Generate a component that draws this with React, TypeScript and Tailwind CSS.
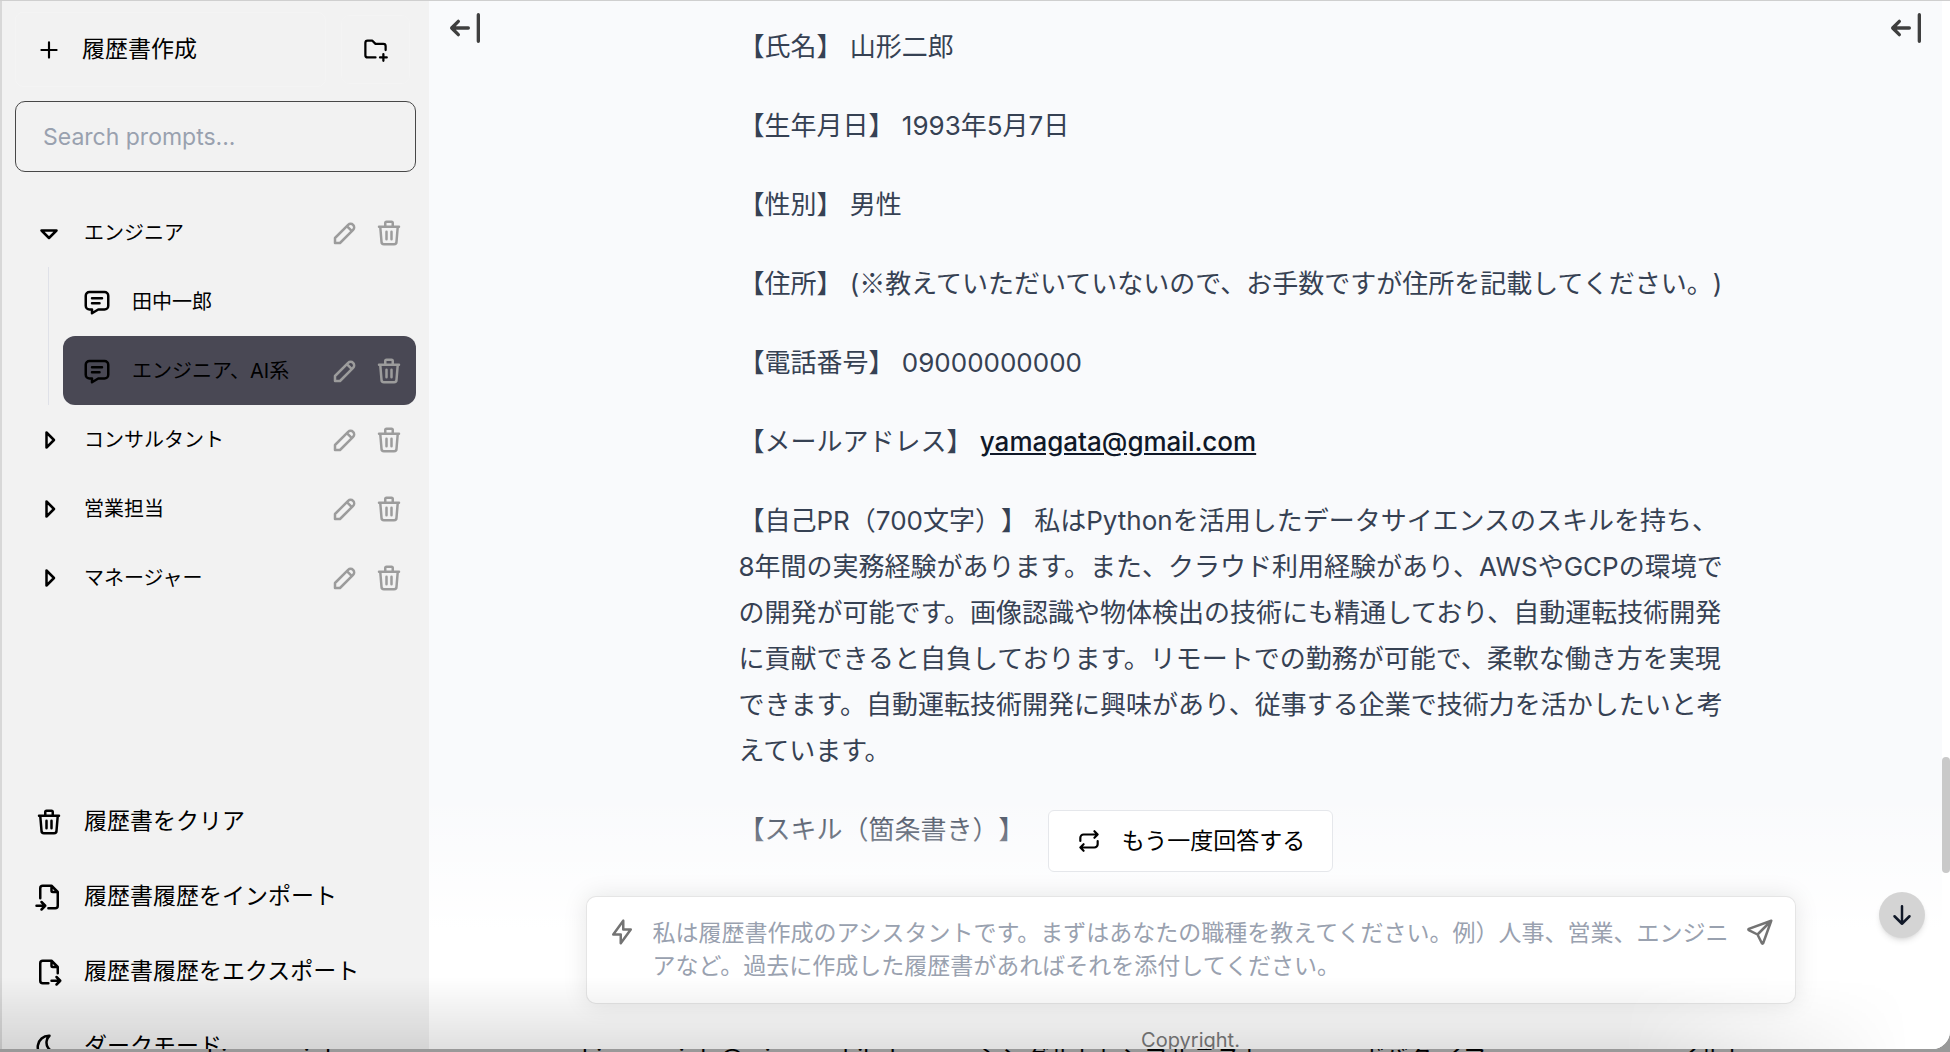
import type { ReactNode } from 'react';

const PATHS = {
  plus: 'M12 5v14M5 12h14',
  folderPlus: 'M12 19h-7a2 2 0 0 1 -2 -2v-11a2 2 0 0 1 2 -2h4l3 3h7a2 2 0 0 1 2 2v3.5M16 19h6M19 16v6',
  caretDown: 'M6 10l6 6l6 -6h-12',
  caretRight: 'M10 18l6 -6l-6 -6v12',
  message:
    'M8 9h8M8 13h6M18 4a3 3 0 0 1 3 3v8a3 3 0 0 1 -3 3h-5l-5 3v-3h-2a3 3 0 0 1 -3 -3v-8a3 3 0 0 1 3 -3h12z',
  pencil: 'M4 20h4l10.5 -10.5a1.5 1.5 0 0 0 -4 -4l-10.5 10.5v4M13.5 6.5l4 4',
  trash:
    'M4 7h16M10 11v6M14 11v6M5 7l1 12a2 2 0 0 0 2 2h8a2 2 0 0 0 2 -2l1 -12M9 7v-3a1 1 0 0 1 1 -1h4a1 1 0 0 1 1 1v3',
  fileImport:
    'M14 3v4a1 1 0 0 0 1 1h4M5 13v-8a2 2 0 0 1 2 -2h7l5 5v11a2 2 0 0 1 -2 2h-5.5m-9.5 -2h7m-3 -3l3 3l-3 3',
  fileExport:
    'M14 3v4a1 1 0 0 0 1 1h4M11.5 21h-4.5a2 2 0 0 1 -2 -2v-14a2 2 0 0 1 2 -2h7l5 5v5m-5 6h7m-3 -3l3 3l-3 3',
  moon: 'M12 3c.132 0 .263 0 .393 0a7.5 7.5 0 0 0 7.92 12.446a9 9 0 1 1 -8.313 -12.454z',
  bolt: 'M13 3v7h6l-8 11v-7h-6l8 -11',
  send: 'M10 14l11 -11M21 3l-6.5 18a.55 .55 0 0 1 -1 0l-3.5 -7l-7 -3.5a.55 .55 0 0 1 0 -1l18 -6.5',
  repeat: 'M4 12v-3a3 3 0 0 1 3 -3h13m-3 -3l3 3l-3 3M20 12v3a3 3 0 0 1 -3 3h-13m3 3l-3 -3l3 -3',
  arrowDown: 'M12 5v14M18 13l-6 6M6 13l6 6',
  arrowBarLeft: 'M4 12h10M4 12l4 4M4 12l4 -4M20 4v16',
};

type IconName = keyof typeof PATHS;

function Icon({ name, size = 30 }: { name: IconName; size?: number }) {
  return (
    <svg
      width={size}
      height={size}
      viewBox="0 0 24 24"
      fill="none"
      stroke="currentColor"
      strokeWidth={2}
      strokeLinecap="round"
      strokeLinejoin="round"
      className="shrink-0"
      aria-hidden="true"
    >
      <path d={PATHS[name]} />
    </svg>
  );
}

function RowActions() {
  return (
    <div className="flex gap-[14px] text-[#9c9c9c]">
      <button aria-label="編集">
        <Icon name="pencil" />
      </button>
      <button aria-label="削除">
        <Icon name="trash" />
      </button>
    </div>
  );
}

function FolderRow({ name, open }: { name: string; open?: boolean }) {
  return (
    <div className="flex h-[69px] items-center pl-[19px] pr-3">
      <button className="flex flex-1 items-center gap-5 text-left text-[20px]" aria-expanded={!!open}>
        <Icon name={open ? 'caretDown' : 'caretRight'} />
        {name}
      </button>
      <RowActions />
    </div>
  );
}

function ChatRow({ name, selected }: { name: string; selected?: boolean }) {
  return (
    <div className={`flex h-[69px] items-center rounded-xl pl-[19px] pr-3 ${selected ? 'bg-[#494854]' : ''}`}>
      <button className="flex flex-1 items-center gap-5 text-left text-[20px]">
        <Icon name="message" />
        {name}
      </button>
      {selected && <RowActions />}
    </div>
  );
}

const menu: { icon: IconName; label: string }[] = [
  { icon: 'trash', label: '履歴書をクリア' },
  { icon: 'fileImport', label: '履歴書履歴をインポート' },
  { icon: 'fileExport', label: '履歴書履歴をエクスポート' },
  { icon: 'moon', label: 'ダークモード' },
];

function Sidebar() {
  return (
    <aside className="flex w-[429px] shrink-0 flex-col border-l-2 border-[#d8d8d8] bg-[#f2f2f2] px-[13px] text-black">
      <div className="mt-[11px] flex items-center justify-between">
        <button className="flex h-[75px] w-[311px] items-center gap-5 rounded-lg border border-[#f4f4f4] pl-5 text-[23px]">
          <Icon name="plus" size={26} />
          履歴書作成
        </button>
        <button
          className="mr-[6px] flex h-[69px] w-[69px] items-center justify-center rounded-lg border border-[#f4f4f4]"
          aria-label="フォルダを追加"
        >
          <Icon name="folderPlus" size={27} />
        </button>
      </div>

      <input
        type="text"
        aria-label="Search prompts"
        placeholder="Search prompts..."
        className="mt-[14px] h-[71px] w-full rounded-[10px] border border-[#484848] bg-transparent px-[27px] text-[23px] placeholder:text-gray-400"
      />

      <div className="mt-[26px] min-h-0 flex-1 overflow-hidden">
        <FolderRow name="エンジニア" open />
        <div className="ml-[33px] border-l border-[#dfe1e8] pl-[14px]">
          <ChatRow name="田中一郎" />
          <ChatRow name="エンジニア、AI系" selected />
        </div>
        <FolderRow name="コンサルタント" />
        <FolderRow name="営業担当" />
        <FolderRow name="マネージャー" />
      </div>

      <div className="flex h-[265px] shrink-0 flex-col overflow-hidden">
        {menu.map((item) => (
          <button key={item.label} className="flex h-[75px] shrink-0 items-center gap-5 pl-[19px] text-[23px]">
            <Icon name={item.icon} />
            {item.label}
          </button>
        ))}
      </div>
    </aside>
  );
}

function Line({ children }: { children: ReactNode }) {
  return <p className="mb-[33px]">{children}</p>;
}

function Answer() {
  return (
    <div className="mx-auto w-full max-w-[1210px] pl-[158px] pr-[60px] pt-[23px] text-[26px] leading-[46px] text-gray-700">
      <Line>【氏名】 山形二郎</Line>
      <Line>【生年月日】 1993年5月7日</Line>
      <Line>【性別】 男性</Line>
      <Line>
        【住所】 (<span className="font-['Noto_Sans_CJK_JP',sans-serif] leading-none">※</span>
        教えていただいていないので、お手数ですが住所を記載してください。)
      </Line>
      <Line>【電話番号】 09000000000</Line>
      <Line>
        【メールアドレス】{' '}
        <a href="mailto:yamagata@gmail.com" className="font-medium text-gray-900 underline">
          yamagata@gmail.com
        </a>
      </Line>
      <Line>
        【自己PR（700文字）】 私はPythonを活用したデータサイエンスのスキルを持ち、8年間の実務経験があります。また、クラウド利用経験があり、AWSやGCPの環境での開発が可能です。画像認識や物体検出の技術にも精通しており、自動運転技術開発に貢献できると自負しております。リモートでの勤務が可能で、柔軟な働き方を実現できます。自動運転技術開発に興味があり、従事する企業で技術力を活かしたいと考えています。
      </Line>
      <Line>【スキル（箇条書き）】</Line>
    </div>
  );
}

function Composer() {
  return (
    <div className="absolute inset-x-0 bottom-0 flex h-[299px] flex-col items-center bg-linear-to-b from-transparent from-15% via-white via-60% to-white pl-[2px] pt-[60px]">
      <button className="flex h-[62px] shrink-0 items-center gap-5 rounded-md border border-gray-200 bg-white px-[27px] text-[23px] text-black">
        <Icon name="repeat" size={26} />
        もう一度回答する
      </button>
      <div className="mt-6 flex h-[108px] w-full max-w-[1210px] shrink-0 items-start rounded-[10px] border border-black/10 bg-white px-5 pt-5 text-[#737373] shadow-[0_0_24px_rgba(0,0,0,0.10)]">
        <button aria-label="モデル">
          <Icon name="bolt" />
        </button>
        <textarea
          aria-label="メッセージ"
          rows={2}
          placeholder="私は履歴書作成のアシスタントです。まずはあなたの職種を教えてください。例）人事、営業、エンジニアなど。過去に作成した履歴書があればそれを添付してください。"
          className="ml-4 h-[66px] flex-1 resize-none overflow-hidden bg-transparent text-[23px] leading-[33px] outline-none placeholder:text-gray-400"
        />
        <button aria-label="送信">
          <Icon name="send" />
        </button>
      </div>
      <p className="mt-[21px] shrink-0 text-[20px] leading-[30px] text-[#7a7a7a]">Copyright.</p>
    </div>
  );
}

export default function App() {
  return (
    <div
      className="flex h-screen flex-col overflow-hidden bg-[#999999] font-['Inter','Noto_Sans_CJK_JP',sans-serif] [text-spacing-trim:space-all]"
      lang="ja"
    >
      <div className="relative flex min-h-0 flex-1 overflow-hidden rounded-br-[18px] border-t border-[#cfcfcf] bg-white">
        <Sidebar />
        <main className="relative min-w-0 flex-1 overflow-hidden">
          <div className="mr-2 flex h-full items-start bg-[#f9fafc]">
            <button aria-label="サイドバーを閉じる" className="ml-4 mt-[7px] text-[#3f3f3f]">
              <Icon name="arrowBarLeft" size={40} />
            </button>
            <Answer />
            <button aria-label="プロンプトを閉じる" className="mr-4 mt-[7px] text-[#3f3f3f]">
              <Icon name="arrowBarLeft" size={40} />
            </button>
          </div>
          <Composer />
          <div className="absolute right-0 top-[756px] h-[116px] w-2 rounded-full bg-[#c9c9c9]" />
          <button
            aria-label="下へスクロール"
            className="absolute bottom-[111px] right-[25px] flex h-[46px] w-[46px] items-center justify-center rounded-full bg-[#d4d4d4] text-gray-900 shadow-md"
          >
            <Icon name="arrowDown" />
          </button>
        </main>
        <div className="pointer-events-none absolute bottom-0 left-0 right-10 h-[72px] bg-linear-to-b from-transparent to-black/12 mask-[linear-gradient(to_right,black_85%,transparent)]" />
      </div>
      {/* sliver of the window underneath */}
      <div
        className="flex h-[3px] shrink-0 items-start overflow-hidden whitespace-nowrap pl-[207px] text-[24px] leading-[18px] text-black"
        aria-hidden="true"
      >
        <span className="w-[375px]">himarawi do</span>
        <span className="w-[395px]">himarawi.do@micromobile.lum</span>
        <span className="w-[383px]">シングルトレンブルテスト</span>
        <span className="w-[315px]">ボバタ イフ</span>
        <span>イルト</span>
      </div>
    </div>
  );
}
